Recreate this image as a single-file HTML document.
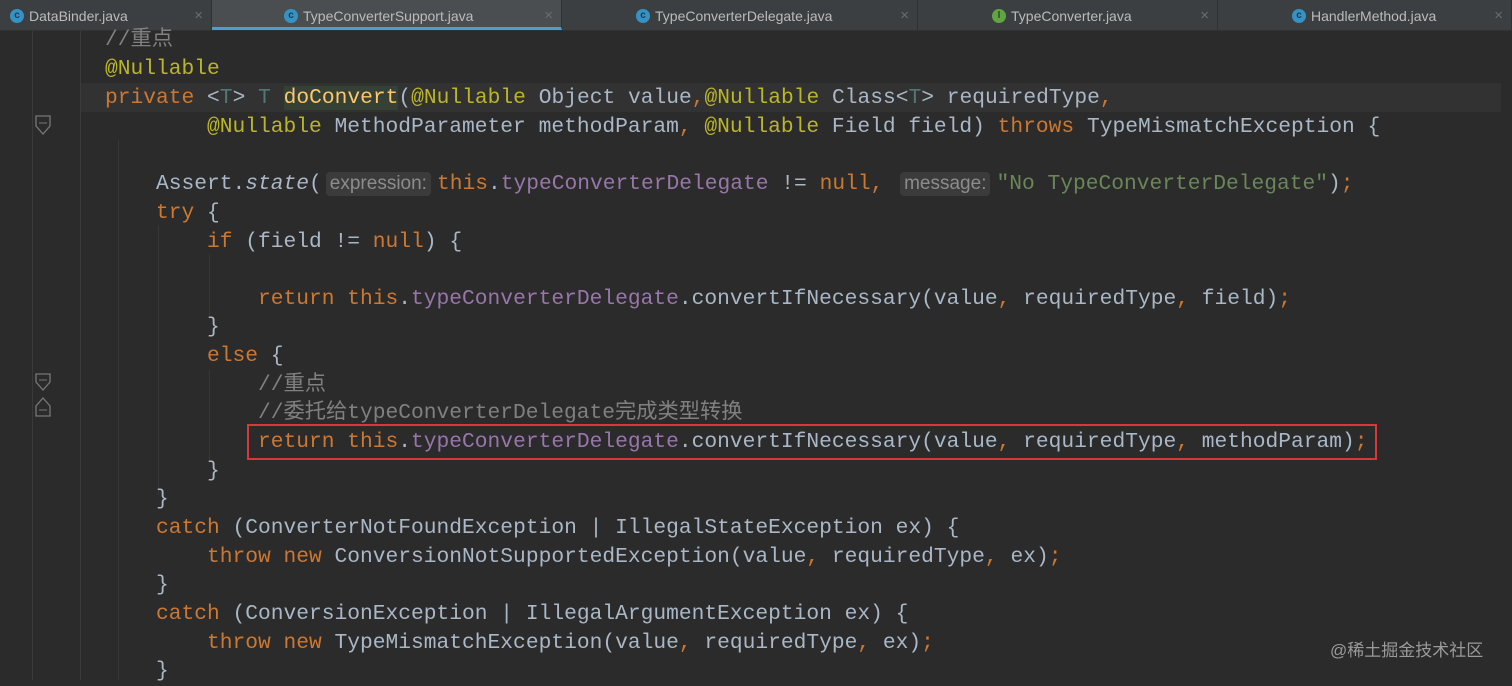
<!DOCTYPE html>
<html><head><meta charset="utf-8"><style>
html,body{margin:0;padding:0;}
body{width:1512px;height:680px;background:#2b2b2b;position:relative;overflow:hidden;font-family:"Liberation Mono","Noto Sans CJK SC",monospace;}
.tabs{position:absolute;left:0;top:0;width:1512px;height:30px;background:#3c3f41;border-bottom:1px solid #323232;}
.tab{position:absolute;top:0;height:30px;font-family:"Liberation Sans","Noto Sans CJK SC",sans-serif;font-size:14px;color:#bbbbbb;line-height:32px;border-right:1px solid #2f3133;box-sizing:border-box;}
.tab .ic{display:inline-block;width:14px;height:14px;border-radius:50%;background:#3592c4;vertical-align:middle;margin-top:-3px;margin-right:5px;color:#1c3c50;font-size:10px;line-height:14px;text-align:center;font-weight:bold}
.tab .x{position:absolute;right:8px;top:0;color:#6a6d70;font-size:15px}
.act{background:#4b4e50;border-bottom:3px solid #4a9ed1}
.gut1{position:absolute;left:32px;top:31px;width:1px;height:649px;background:#3a3a3a}
.gut2{position:absolute;left:80px;top:31px;width:1px;height:649px;background:#3a3a3a}
.ln{position:absolute;left:0;height:29px;line-height:29px;font-size:21.25px;white-space:pre;color:#a9b7c6;margin-top:2px}
.hl{position:absolute;left:81px;width:1420px;top:83px;height:29px;background:#323232}
.k{color:#cc7832}.a{color:#bbb529}.f{color:#9876aa}.c{color:#808080}.s{color:#6a8759}.g{color:#507874}
.h{display:inline-block;background:#3b3b3b;color:#8c8c8c;font-family:"Liberation Sans",sans-serif;font-size:19px;border-radius:4px;padding:0 4px;line-height:24px;margin:0 6px 0 4px}
.box{position:absolute;left:247px;top:424px;width:1126px;height:32px;border:2px solid #d8383a}
.guide{position:absolute;width:1px;background:#373737}
.wm{position:absolute;left:1330px;top:636px;font-family:"Liberation Sans","Noto Sans CJK SC",sans-serif;font-size:17px;color:#9a9a9a}
</style></head><body>
<div class="tabs">
<div class="tab" style="left:0;width:212px;padding-left:10px"><span class="ic">c</span>DataBinder.java<span class="x">×</span></div>
<div class="tab act" style="left:212px;width:350px;padding-left:72px"><span class="ic">c</span>TypeConverterSupport.java<span class="x">×</span></div>
<div class="tab" style="left:562px;width:356px;padding-left:74px"><span class="ic">c</span>TypeConverterDelegate.java<span class="x">×</span></div>
<div class="tab" style="left:918px;width:300px;padding-left:74px"><span class="ic" style="background:#62a343;color:#2c4a1f">I</span>TypeConverter.java<span class="x">×</span></div>
<div class="tab" style="left:1218px;width:294px;padding-left:74px"><span class="ic">c</span>HandlerMethod.java<span class="x">×</span></div>
</div>
<div class="hl"></div>
<div class="gut1"></div><div class="gut2"></div>
<div class="guide" style="left:118px;top:140px;height:540px"></div>
<div class="guide" style="left:158px;top:225px;height:270px"></div>
<div class="guide" style="left:209px;top:255px;height:60px"></div>
<div class="guide" style="left:209px;top:370px;height:90px"></div>
<div class="ln" style="top:24px;left:105px"><span class="c">//重点</span></div>
<div class="ln" style="top:53px;left:105px"><span class="a">@Nullable</span></div>
<div class="ln" style="top:82px;left:105px"><span class="k">private </span>&lt;<span class="g">T</span>&gt; <span class="g">T</span> <span style="color:#ffc66d;background:#344134">doConvert</span>(<span class="a">@Nullable</span> Object value<span class="k">,</span><span class="a">@Nullable</span> Class&lt;<span class="g">T</span>&gt; requiredType<span class="k">,</span></div>
<div class="ln" style="top:111px;left:207px"><span class="a">@Nullable</span> MethodParameter methodParam<span class="k">, </span><span class="a">@Nullable</span> Field field) <span class="k">throws</span> TypeMismatchException {</div>
<div class="ln" style="top:168px;left:156px">Assert.<i>state</i>(<span class="h">expression:</span><span class="k">this</span>.<span class="f">typeConverterDelegate</span> != <span class="k">null,</span> <span class="h">message:</span><span class="s">"No TypeConverterDelegate"</span>)<span class="k">;</span></div>
<div class="ln" style="top:197px;left:156px"><span class="k">try</span> {</div>
<div class="ln" style="top:226px;left:207px"><span class="k">if</span> (field != <span class="k">null</span>) {</div>
<div class="ln" style="top:283px;left:258px"><span class="k">return this</span>.<span class="f">typeConverterDelegate</span>.convertIfNecessary(value<span class="k">,</span> requiredType<span class="k">,</span> field)<span class="k">;</span></div>
<div class="ln" style="top:311px;left:207px">}</div>
<div class="ln" style="top:340px;left:207px"><span class="k">else</span> {</div>
<div class="ln" style="top:369px;left:258px"><span class="c">//重点</span></div>
<div class="ln" style="top:397px;left:258px"><span class="c">//委托给typeConverterDelegate完成类型转换</span></div>
<div class="ln" style="top:426px;left:258px"><span class="k">return this</span>.<span class="f">typeConverterDelegate</span>.convertIfNecessary(value<span class="k">,</span> requiredType<span class="k">,</span> methodParam)<span class="k">;</span></div>
<div class="ln" style="top:455px;left:207px">}</div>
<div class="ln" style="top:483px;left:156px">}</div>
<div class="ln" style="top:512px;left:156px"><span class="k">catch</span> (ConverterNotFoundException | IllegalStateException ex) {</div>
<div class="ln" style="top:541px;left:207px"><span class="k">throw new</span> ConversionNotSupportedException(value<span class="k">,</span> requiredType<span class="k">,</span> ex)<span class="k">;</span></div>
<div class="ln" style="top:569px;left:156px">}</div>
<div class="ln" style="top:598px;left:156px"><span class="k">catch</span> (ConversionException | IllegalArgumentException ex) {</div>
<div class="ln" style="top:627px;left:207px"><span class="k">throw new</span> TypeMismatchException(value<span class="k">,</span> requiredType<span class="k">,</span> ex)<span class="k">;</span></div>
<div class="ln" style="top:655px;left:156px">}</div>
<div class="box"></div>
<svg style="position:absolute;left:34px;top:114px" width="20" height="24"><path d="M2 2H16V12L9 20L2 12Z" fill="none" stroke="#777" stroke-width="1.3"/><path d="M5 9H13" stroke="#777"/></svg>
<svg style="position:absolute;left:34px;top:372px" width="20" height="48"><path d="M2 2H16V10L9 18L2 10Z" fill="none" stroke="#777" stroke-width="1.3"/><path d="M9 26L16 34V44H2V34Z" fill="none" stroke="#777" stroke-width="1.3"/><path d="M5 8H13M5 38H13" stroke="#777"/></svg>
<div class="wm">@稀土掘金技术社区</div>
</body></html>
